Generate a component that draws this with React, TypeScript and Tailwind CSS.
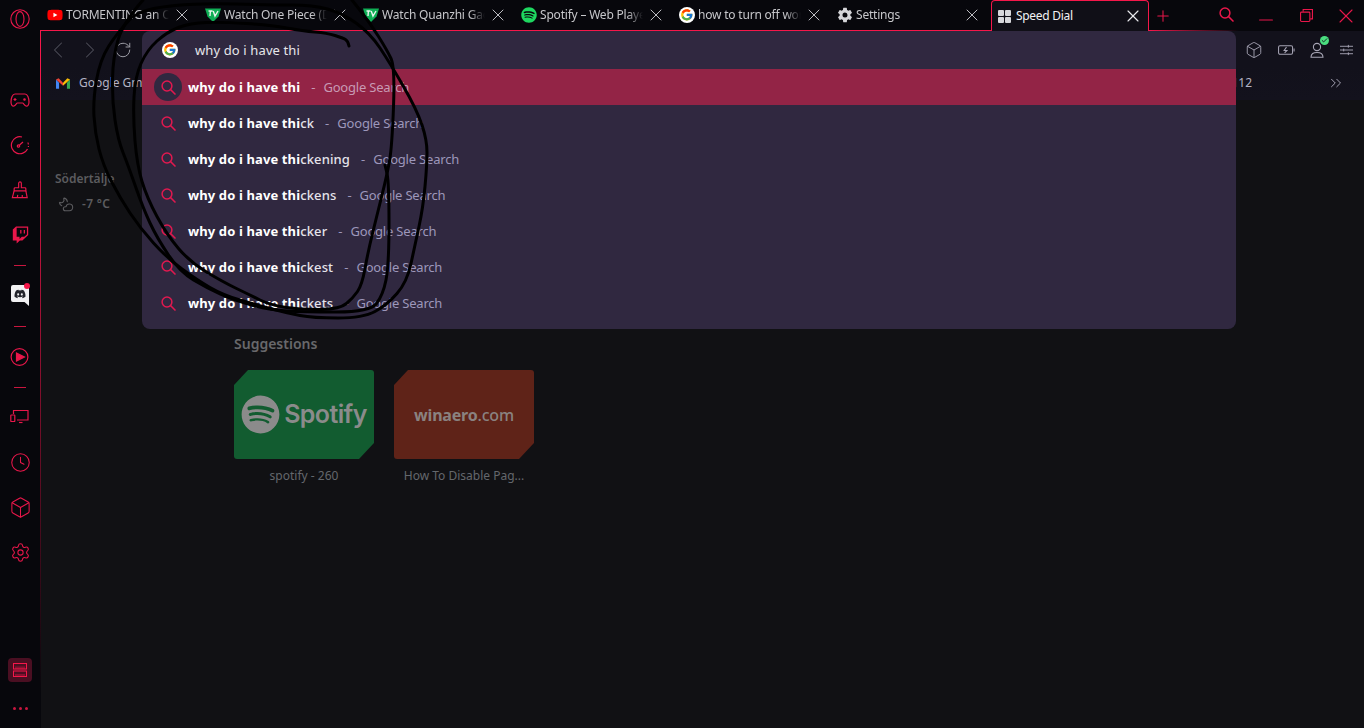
import React from "react";
import { X, Plus, ChevronLeft, ChevronRight, RotateCw, Box, Clock, Settings, Minus, ChevronsRight, Check, CloudMoon } from "lucide-react";
import { FaYoutube, FaSpotify, FaTwitch, FaDiscord } from "react-icons/fa";
import { FcGoogle } from "react-icons/fc";
import { IoSettingsSharp } from "react-icons/io5";

const RED = "#e8174a";

function TvIcon() {
  return (
    <svg viewBox="0 0 16 14" className="w-4 h-[14px] shrink-0">
      <path d="M0 0.5 L16 0.5 L13.5 8.5 L8 14 L2.5 8.5 Z" fill="#0fae55" />
      <path d="M3.5 3 H7.5 M5.4 3 L5 8 M8.2 3 L10 8 L13 3" stroke="#e8f5ec" strokeWidth="1.4" fill="none" />
    </svg>
  );
}

// small lens, long handle, like the browser's own search glyph
function SearchIcon({ className, color }: { className: string; color: string }) {
  return (
    <svg viewBox="0 0 15 15" className={className} fill="none" stroke={color} strokeWidth="1.5">
      <circle cx="6" cy="6" r="4.9" />
      <path d="M9.6 9.6 L14.5 14.5" />
    </svg>
  );
}

function GoogleIcon({ size = "w-4 h-4" }: { size?: string }) {
  return (
    <span className={`${size} rounded-full bg-white flex items-center justify-center shrink-0`}>
      <FcGoogle className="w-[85%] h-[85%]" />
    </span>
  );
}

function YoutubeIcon() {
  return (
    <span className="relative w-4 h-4 shrink-0 flex items-center justify-center">
      <span className="absolute left-[5px] top-[5px] w-[7px] h-[6px] bg-white" />
      <FaYoutube className="relative w-4 h-4 text-[#f00]" />
    </span>
  );
}

const tabs = [
  { title: "TORMENTING an OP", icon: <YoutubeIcon /> },
  { title: "Watch One Piece (Dub)", icon: <TvIcon /> },
  { title: "Watch Quanzhi Gaoshou", icon: <TvIcon /> },
  { title: "Spotify – Web Player", icon: <FaSpotify className="w-4 h-4 text-[#1ed760] shrink-0" /> },
  { title: "how to turn off word wrap", icon: <GoogleIcon /> },
  { title: "Settings", icon: <IoSettingsSharp className="w-4 h-4 text-[#d4d4d8] shrink-0" /> },
];

const suggestions = [
  { rest: "", active: true },
  { rest: "ck" },
  { rest: "ckening" },
  { rest: "ckens" },
  { rest: "cker" },
  { rest: "ckest" },
  { rest: "ckets" },
];

function SideIcon({ children }: { children: React.ReactNode }) {
  return <div className="h-[45px] w-full flex items-center justify-center shrink-0">{children}</div>;
}

function SideSep() {
  return (
    <div className="h-[16px] flex items-center justify-center shrink-0">
      <div className="w-3 h-px bg-[#c9163f]" />
    </div>
  );
}

function Sidebar() {
  const cls = "w-[20px] h-[20px]";
  return (
    <aside className="w-[40px] shrink-0 h-full bg-[#07070c] flex flex-col items-center">
      <div className="h-[77px] pt-[9px] shrink-0">
        <svg viewBox="0 0 20 20" className="w-[20px] h-[20px]" fill="none" stroke={RED} strokeWidth="1.1">
          <circle cx="10" cy="10" r="9.2" />
          <ellipse cx="10" cy="10" rx="4" ry="7.4" />
        </svg>
      </div>
      <SideIcon>
        <svg viewBox="0 0 20 20" className={cls} fill="none" stroke={RED} strokeWidth="1.2">
          <path d="M5 4 H15 C17.5 4 19 8 19 12 C19 15 17.5 16.5 16 16 C14.5 15.5 13.5 13 12.5 13 H7.5 C6.5 13 5.5 15.5 4 16 C2.5 16.5 1 15 1 12 C1 8 2.5 4 5 4 Z" />
          <path d="M5 8 V11 M3.5 9.5 H6.5" />
          <circle cx="14.5" cy="9.5" r="0.7" fill={RED} />
        </svg>
      </SideIcon>
      <SideIcon>
        <svg viewBox="0 0 20 20" className={cls} fill="none" stroke={RED} strokeWidth="1.2">
          <path d="M12 2 A8.5 8.5 0 1 0 17.5 14" />
          <path d="M18 7.5 L18.4 9.5 M18.5 11 L18.3 12" />
          <path d="M9.5 10 L13 7" />
          <circle cx="8.5" cy="11" r="1.2" />
        </svg>
      </SideIcon>
      <SideIcon>
        <svg viewBox="0 0 20 20" className="w-[18px] h-[18px]" fill="none" stroke={RED} strokeWidth="1.3">
          <path d="M8.5 2.5 A1.5 1.5 0 0 1 11.5 2.5 V7.5 H15.5 A1 1 0 0 1 16.5 8.5 V11 H3.5 V8.5 A1 1 0 0 1 4.5 7.5 H8.5 Z" />
          <path d="M3.5 11 L1.5 18.5 H18 L16.5 11" />
          <path d="M7 18.5 L7.5 15.5 M12.5 18.5 V15.5" />
        </svg>
      </SideIcon>
      <SideIcon>
        <FaTwitch className="w-[17px] h-[18px]" style={{ color: RED }} />
      </SideIcon>
      <SideSep />
      <div className="h-[45px] w-full flex items-center justify-center shrink-0">
        <div className="relative">
          <svg viewBox="0 0 18 21" className="w-[18px] h-[21px]">
            <path d="M2 0 H16 A2 2 0 0 1 18 2 V21 L13.5 17 H2 A2 2 0 0 1 0 15 V2 A2 2 0 0 1 2 0 Z" fill="#f1f1f3" />
          </svg>
          <FaDiscord className="absolute left-[3px] top-[3px] w-3 h-3 text-[#23242c]" />
          <span className="absolute -right-[1px] -top-[2px] w-[6px] h-[6px] rounded-full bg-[#f5174a]" />
        </div>
      </div>
      <SideSep />
      <SideIcon>
        <svg viewBox="0 0 20 20" className={cls} fill="none" stroke={RED} strokeWidth="1.2">
          <circle cx="9.5" cy="10" r="8.4" />
          <path d="M6.5 6 L14.5 10 L6.5 14 Z" fill={RED} />
        </svg>
      </SideIcon>
      <SideSep />
      <SideIcon>
        <svg viewBox="0 0 20 20" className={cls} fill="none" stroke={RED} strokeWidth="1.2">
          <path d="M3.5 6 V2.5 H18 V12 H7" />
          <path d="M9 14.5 H12.5" />
          <rect x="0.8" y="7" width="4" height="6.5" rx="0.6" />
        </svg>
      </SideIcon>
      <SideIcon><Clock className="w-[21px] h-[21px]" strokeWidth={1.2} style={{ color: RED }} /></SideIcon>
      <SideIcon><Box className="w-[23px] h-[23px]" strokeWidth={1.1} style={{ color: RED }} /></SideIcon>
      <SideIcon><Settings className="w-[21px] h-[21px]" strokeWidth={1.2} style={{ color: RED }} /></SideIcon>
      <div className="flex-1" />
      <div className="w-6 h-6 rounded-[4px] bg-[#4a0f22] flex items-center justify-center shrink-0">
        <svg viewBox="0 0 14 14" className="w-[14px] h-[14px]" fill="none" stroke="#f5174a" strokeWidth="1">
          <rect x="0.5" y="0.5" width="13" height="5.5" />
          <rect x="0.5" y="8" width="13" height="5.5" />
          <path d="M3 3.5 V6 M5 3.5 V6 M7 3.5 V6 M9 3.5 V6 M11 3.5 V6 M3 11 V13.5 M5 11 V13.5 M7 11 V13.5 M9 11 V13.5 M11 11 V13.5" strokeWidth="0.7" />
        </svg>
      </div>
      <div className="h-[46px] flex items-center gap-[3px] pt-[6px] shrink-0">
        <span className="w-[3px] h-[3px] rounded-full bg-[#c9163f]" />
        <span className="w-[3px] h-[3px] rounded-full bg-[#c9163f]" />
        <span className="w-[3px] h-[3px] rounded-full bg-[#c9163f]" />
      </div>
    </aside>
  );
}

function TabStrip() {
  return (
    <div className="h-[31px] shrink-0 flex items-stretch bg-[#07070c]">
      <div className="w-px border-b border-[#f5174a] shrink-0" />
      {tabs.map((t) => (
        <div key={t.title} className="w-[158px] shrink-0 flex items-center gap-[3px] pl-[6px] border-b border-[#f5174a]">
          {t.icon}
          <span className="w-[103px] whitespace-nowrap overflow-hidden text-[12px] tracking-[-0.2px] text-[#c6c6ca] [mask-image:linear-gradient(to_right,black_85%,transparent)]">{t.title}</span>
          <X className="w-[20px] h-[20px] text-[#bdbdc2] shrink-0" strokeWidth={1.2} />
        </div>
      ))}
      <div className="w-[2px] border-b border-[#f5174a] shrink-0" />
      <div className="w-[158px] shrink-0 flex items-center pl-[6px] gap-[3px] bg-[#100f17] border-x border-t border-[#f5174a] rounded-t-[4px]">
        <span className="grid grid-cols-2 gap-px w-[13px] h-[13px] mr-[2px] shrink-0">
          <span className="bg-[#d8d8dc] rounded-[1px]" />
          <span className="bg-[#d8d8dc] rounded-[1px]" />
          <span className="bg-[#d8d8dc] rounded-[1px]" />
          <span className="bg-[#d8d8dc] rounded-[1px]" />
        </span>
        <span className="w-[104px] whitespace-nowrap text-[12px] tracking-[-0.3px] text-[#f2f2f4]">Speed Dial</span>
        <X className="w-[20px] h-[20px] text-[#e8e8ec] shrink-0" strokeWidth={1.4} />
      </div>
      <div className="flex-1 flex items-center pl-[5px] bg-[linear-gradient(to_right,#f5174a,transparent_90px)] bg-no-repeat bg-bottom bg-[length:100%_1px]">
        <Plus className="w-[18px] h-[18px]" strokeWidth={1.4} style={{ color: RED }} />
        <div className="flex-1" />
        <div className="w-[40px] flex justify-center -mt-[3px]">
          <SearchIcon className="w-[15px] h-[15px]" color={RED} />
        </div>
        <div className="w-[40px] flex justify-center mt-[9px]">
          <Minus className="w-[22px] h-[22px]" strokeWidth={1.2} style={{ color: RED }} />
        </div>
        <div className="w-[40px] flex justify-center">
          <svg viewBox="0 0 14 14" className="w-[13px] h-[13px]" fill="none" stroke={RED} strokeWidth="1.2">
            <rect x="0.6" y="3.4" width="10" height="10" rx="1" />
            <path d="M3.4 3 V0.6 H13.4 V10.6 H11" />
          </svg>
        </div>
        <div className="w-[38px] pl-[8px]">
          <X className="w-[24px] h-[24px]" strokeWidth={1.1} style={{ color: RED }} />
        </div>
      </div>
    </div>
  );
}

function Toolbar() {
  return (
    <div className="h-[37px] shrink-0 flex items-center bg-[#12111b] pl-[3px] pr-[11px]">
      <ChevronLeft className="w-[28px] h-[28px] text-[#4f4f59]" strokeWidth={0.9} />
      <ChevronRight className="w-[28px] h-[28px] ml-[4px] text-[#4f4f59]" strokeWidth={0.9} />
      <RotateCw className="w-[18px] h-[18px] ml-[10px] text-[#9f9fa8]" strokeWidth={1.3} />
      <div className="flex-1" />
      <Box className="w-[18px] h-[18px] text-[#a7a5b5]" strokeWidth={1.2} />
      <svg viewBox="0 0 18 12" className="w-[17px] h-[12px] ml-[15px] text-[#a7a5b5]" fill="none" stroke="currentColor" strokeWidth="1.1">
        <rect x="0.6" y="1.5" width="14.8" height="9" rx="1.5" />
        <path d="M17 4.5 V7.5" />
        <path d="M9 3 L6.5 6.5 H9.5 L7 9" />
      </svg>
      <div className="relative ml-[15px] w-[14px] h-[16px]">
        <svg viewBox="0 0 14 16" className="w-[14px] h-[16px] text-[#a7a5b5]" fill="none" stroke="currentColor" strokeWidth="1.1">
          <circle cx="7" cy="5" r="3.6" />
          <path d="M1 15.3 C1 11.5 3.5 10.5 7 10.5 C10.5 10.5 13 11.5 13 15.3 Z" />
        </svg>
        <span className="absolute left-[10px] -top-[6px] w-[9px] h-[9px] rounded-full bg-[#4ade80] flex items-center justify-center">
          <Check className="w-[7px] h-[7px] text-[#12111b]" strokeWidth={3} />
        </span>
      </div>
      <svg viewBox="0 0 14 12" className="w-[13px] h-[12px] ml-[16px] text-[#a7a5b5]" fill="none" stroke="currentColor" strokeWidth="1">
        <path d="M0 2 H14 M0 6 H14 M0 10 H14" />
        <path d="M9 0.5 V3.5 M4 4.5 V7.5 M9 8.5 V11.5" />
      </svg>
    </div>
  );
}

function BookmarkBar() {
  return (
    <div className="h-[32px] shrink-0 flex items-center bg-gradient-to-b from-[#12111b] to-[#13121d] pl-[15px] pr-[19px] pb-[2px]">
      <svg viewBox="0 0 16 12" className="w-[14px] h-[11px] shrink-0">
        <path d="M0 1.5 V12 H3.5 V5 Z" fill="#4285f4" />
        <path d="M16 1.5 V12 H12.5 V5 Z" fill="#34a853" />
        <path d="M0 1.5 L3 0 L8 5 L8 8.5 Z" fill="#ea4335" />
        <path d="M16 1.5 L13 0 L8 5 V8.5 Z" fill="#fbbc04" />
      </svg>
      <span className="ml-[9px] text-[12px] text-[#b4b3c4] whitespace-nowrap">Google Gmail</span>
      <div className="flex-1" />
      <span className="text-[12px] text-[#b4b3c4]">112</span>
      <ChevronsRight className="w-[18px] h-[18px] ml-[75px] text-[#a7a5b5]" strokeWidth={1.3} />
    </div>
  );
}

function SpeedDial() {
  return (
    <div className="flex-1 bg-[#111114] flex">
      <div className="w-[193px] shrink-0 pl-[14px] pt-[71px]">
        <div className="text-[12px] font-semibold leading-[16px] text-[#5c5c5f]">Södertälje</div>
        <div className="mt-[8px] flex items-center pl-[3px]">
          <CloudMoon className="w-[16px] h-[16px] -scale-x-100 text-[#5c5c5f]" strokeWidth={1.6} />
          <span className="ml-[8px] text-[12px] font-semibold tracking-[0.3px] text-[#5c5c5f]">-7 °C</span>
        </div>
      </div>
      <div className="pt-[234px]">
        <div className="text-[14px] font-semibold leading-[20px] text-[#68686b]">Suggestions</div>
        <div className="mt-[16px] flex gap-[20px]">
          <div className="w-[140px]">
            <div className="h-[89px] rounded-[3px] bg-[#125c30] flex items-center justify-center gap-[4px] [clip-path:polygon(14px_0,100%_0,100%_calc(100%-16px),calc(100%-15px)_100%,0_100%,0_15px)]">
              <FaSpotify className="w-[39px] h-[39px] text-[#8b8b8b] shrink-0" />
              <span className="font-['Inter',sans-serif] text-[25px] font-semibold tracking-[-0.6px] text-[#8b8b8b]">Spotify</span>
            </div>
            <div className="mt-[9px] text-center text-[12px] leading-[16px] text-[#64676c]">spotify - 260</div>
          </div>
          <div className="w-[140px]">
            <div className="h-[89px] rounded-[3px] bg-[#5f2318] flex items-center justify-center [clip-path:polygon(14px_0,100%_0,100%_calc(100%-16px),calc(100%-15px)_100%,0_100%,0_15px)]">
              <span className="text-[16px] font-bold tracking-[-0.2px] text-[#8a8280]">winaero<span className="font-medium">.com</span></span>
            </div>
            <div className="mt-[9px] text-center text-[12px] leading-[16px] text-[#64676c]">How To Disable Pag...</div>
          </div>
        </div>
      </div>
    </div>
  );
}

function Omnibox() {
  return (
    <div className="absolute left-[142px] top-[31px] w-[1094px] h-[298px] rounded-[8px] bg-[#302840] overflow-hidden">
      <div className="h-[38px] flex items-center pl-[20px]">
        <GoogleIcon />
        <span className="ml-[17px] pt-[1px] text-[13px] tracking-[0.12px] text-[#e6e6ea]">why do i have thi</span>
      </div>
      {suggestions.map((s) => (
        <div key={s.rest} className={`h-[36px] flex items-center pl-[12px] text-[13px] ${s.active ? "bg-[#932446]" : ""}`}>
          <span className={`w-[28px] h-[28px] rounded-full flex items-center justify-center shrink-0 ${s.active ? "bg-[#302840]" : ""}`}>
            <SearchIcon className="w-[15px] h-[15px]" color="#e0194f" />
          </span>
          <span className="ml-[6px] pt-[1px] whitespace-nowrap text-white tracking-[0.12px]">
            <b className="font-bold">why do i have thi</b>
            <span className="font-medium text-[#e4e3ea]">{s.rest}</span>
          </span>
          <span className={`ml-[11px] pt-[1px] ${s.active ? "text-[#c89ab4]" : "text-[#9d97bb]"}`}>-</span>
          <span className={`ml-[8px] pt-[1px] whitespace-nowrap tracking-[-0.2px] ${s.active ? "text-[#c89ab4]" : "text-[#9d97bb]"}`}>Google Search</span>
        </div>
      ))}
    </div>
  );
}

// turns a list of points into a smooth pen line
function penLine(points: string) {
  const p = points.split(" ").map((s) => s.split(",").map(Number));
  let d = `M${p[0][0]} ${p[0][1]}`;
  for (let i = 1; i < p.length - 1; i++) {
    d += ` Q${p[i][0]} ${p[i][1]} ${(p[i][0] + p[i + 1][0]) / 2} ${(p[i][1] + p[i + 1][1]) / 2}`;
  }
  const last = p[p.length - 1];
  return `${d} L${last[0]} ${last[1]}`;
}

// hand drawn circles on top of the screenshot
function Scribble() {
  const strokes = [
    "349,46 348,41 343,38 327,33 303,31 270,25 223,22 190,23 167,32 147,50 135,77 133,117 137,165 147,198 167,235 190,262 223,282 250,295 270,305 303,310 340,309 353,298 362,285 368,252 377,215 387,175 392,147 395,67 387,50 370,23 352,0",
    "143,0 123,23 113,57 112,100 118,140 128,165 143,208 157,238 180,272 207,288 233,300 270,310 303,312 370,312 383,295 389,265 389,182 385,165",
    "132,17 117,33 100,60 93,100 95,133 103,165 120,198 140,228 167,258 197,280 223,295 257,305 287,313 313,318 363,318 387,305 407,282 415,245 423,208 427,165 427,140 417,110 390,63 370,33 342,13 313,5 270,5 200,3 150,8 132,17",
  ];
  return (
    <svg className="absolute left-0 top-0 w-[1364px] h-[728px] pointer-events-none" viewBox="0 0 1364 728" fill="none" stroke="#000" strokeWidth="3" strokeLinecap="round" strokeLinejoin="round">
      {strokes.map((s, i) => <path key={i} d={penLine(s)} />)}
    </svg>
  );
}

export default function App() {
  return (
    <div className="relative w-[1364px] h-[728px] overflow-hidden flex bg-[#07070c] font-['Noto_Sans',sans-serif]">
      <Sidebar />
      <div className="flex-1 min-w-0 flex flex-col">
        <TabStrip />
        <div className="flex-1 flex min-h-0">
          <div className="w-px shrink-0 bg-gradient-to-b from-[#f5174a] from-10% to-transparent to-95%" />
          <div className="flex-1 min-w-0 flex flex-col">
            <Toolbar />
            <BookmarkBar />
            <SpeedDial />
          </div>
        </div>
      </div>
      <Omnibox />
      <Scribble />
    </div>
  );
}
